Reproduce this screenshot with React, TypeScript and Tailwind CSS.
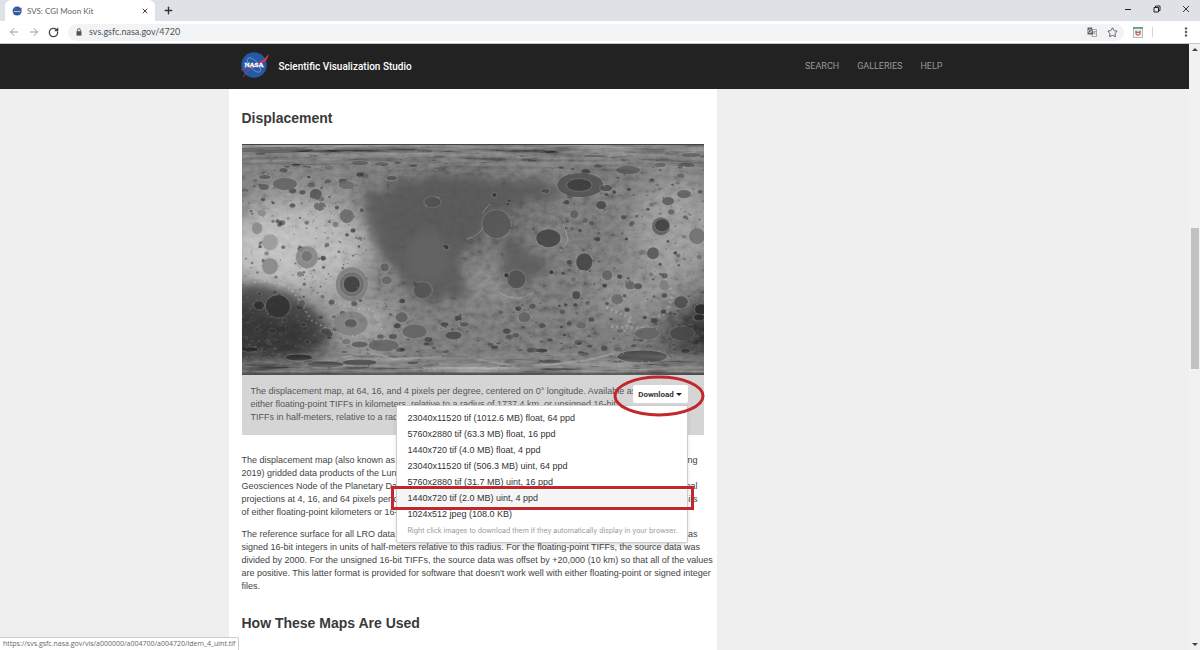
import { useState } from "react";
import { ArrowLeft, ArrowRight, MoreVertical, Plus, RotateCw, Star, X } from "lucide-react";

const downloads = [
  "23040x11520 tif (1012.6 MB) float, 64 ppd",
  "5760x2880 tif (63.3 MB) float, 16 ppd",
  "1440x720 tif (4.0 MB) float, 4 ppd",
  "23040x11520 tif (506.3 MB) uint, 64 ppd",
  "5760x2880 tif (31.7 MB) uint, 16 ppd",
  "1440x720 tif (2.0 MB) uint, 4 ppd",
  "1024x512 jpeg (108.0 KB)",
];

// x, y, rx, ry, floor colour
const craters: [number, number, number, number, string][] = [
  [30, 6, 42, 3, "#474747"], [115, 5, 25, 2, "#555"], [118, 19, 9, 2, "#4c4c4c"], [140, 20, 7, 2, "#4c4c4c"],
  [43, 40, 12, 6, "#626262"], [23, 33, 6, 2, "#5b5b5b"], [22, 43, 5, 3, "#5b5b5b"], [74, 50, 6, 5, "#555"],
  [78, 62, 6, 4, "#686868"], [105, 72, 7, 7, "#696969"], [20, 69, 4, 3, "#8a8a8a"], [15, 84, 5, 6, "#888"],
  [28, 98, 8, 8, "#9a9a9a"], [28, 122, 8, 8, "#868686"], [65, 113, 11, 11, "#858585"], [65, 112, 5, 5, "#707070"],
  [110, 140, 16, 17, "#7c7c7c"], [110, 140, 12, 12, "#6a6a6a"], [110, 140, 8, 8, "#3c3c3c"], [36, 162, 12, 11, "#303030"],
  [17, 161, 5, 4, "#2c2c2c"], [109, 179, 17, 12, "#808080"], [109, 179, 6, 4, "#555"], [84, 187, 5, 3, "#444"],
  [60, 159, 3, 3, "#555"], [57, 213, 13, 3, "#1c1c1c"], [8, 205, 8, 2, "#222"], [118, 200, 8, 3, "#5a5a5a"],
  [142, 201, 15, 6, "#636363"], [118, 218, 17, 3, "#363636"], [84, 220, 18, 3, "#363636"], [20, 220, 18, 2, "#383838"],
  [160, 173, 6, 5, "#5e5e5e"], [173, 187, 12, 7, "#616161"], [212, 191, 8, 4, "#494949"], [203, 180, 4, 2, "#444"],
  [223, 180, 4, 2, "#555"], [143, 123, 4, 4, "#5d5d5d"], [145, 136, 5, 4, "#636363"], [181, 146, 9, 8, "#525252"],
  [120, 66, 2, 2, "#555"], [255, 80, 14, 14, "#545454"], [307, 94, 12, 9, "#434343"], [343, 118, 8, 9, "#434343"],
  [275, 135, 9, 9, "#515151"], [339, 41, 23, 12, "#505050"], [338, 41, 12, 6, "#3b3b3b"], [365, 44, 6, 3, "#4b4b4b"],
  [387, 26, 12, 4, "#565656"], [360, 61, 5, 4, "#484848"], [333, 70, 4, 4, "#5c5c5c"], [420, 82, 9, 9, "#595959"],
  [421, 81, 7, 6, "#414141"], [427, 57, 6, 4, "#5b5b5b"], [443, 50, 7, 4, "#5f5f5f"], [456, 92, 8, 8, "#707070"],
  [412, 109, 6, 6, "#555"], [366, 131, 5, 5, "#626262"], [335, 151, 4, 4, "#454545"], [389, 141, 5, 4, "#616161"],
  [397, 142, 4, 3, "#505050"], [423, 141, 5, 5, "#7c7c7c"], [440, 158, 7, 6, "#4b4b4b"], [376, 155, 6, 5, "#696969"],
  [406, 189, 12, 6, "#626262"], [441, 189, 12, 7, "#484848"], [460, 165, 6, 5, "#252525"], [458, 173, 5, 3, "#272727"],
  [401, 212, 25, 6, "#424242"], [308, 217, 12, 2, "#4a4a4a"], [300, 206, 6, 2, "#3b3b3b"], [340, 181, 5, 3, "#656565"],
  [283, 173, 6, 5, "#616161"], [304, 47, 4, 2, "#484848"], [373, 48, 2, 2, "#444"], [280, 12, 8, 1, "#555"],
  [355, 12, 12, 1, "#505050"], [445, 21, 9, 2, "#4d4d4d"], [450, 11, 10, 2, "#4d4d4d"], [419, 21, 6, 2, "#555"],
  [150, 34, 5, 2, "#505050"], [105, 41, 8, 4, "#6a6a6a"], [205, 103, 2, 2, "#333"],
  [253, 51, 2, 2, "#333"], [191, 58, 8, 5, "#4f4f4f"], [265, 131, 2, 2, "#2c2c2c"], [310, 128, 2, 2, "#333"],
];

// small craters scattered over the highlands, flatter towards the poles
const scatter = (() => {
  let seed = 4720;
  const next = () => (seed = (seed * 16807) % 2147483647) / 2147483647;
  const list: { x: number; y: number; rx: number; ry: number; o: number }[] = [];
  while (list.length < 1200) {
    const x = next() * 463;
    const y = next() * 222 + 6;
    const size = 0.6 + next() ** 4 * 2.6;
    const o = 0.25 + next() * 0.5;
    const basin = x > 125 && x < 315 && y > 25 && y < 155;
    if (basin && next() < 0.95) continue;
    const lat = Math.abs(y - 115) / 115;
    const stretch = 1 / Math.sqrt(Math.max(0.06, 1 - lat * lat));
    list.push({ x, y, rx: size * Math.min(stretch, 4), ry: size * (lat > 0.8 ? 0.6 : 0.9), o });
  }
  return list;
})();

const MoonMap = () => (
  <svg viewBox="0 0 463 231" preserveAspectRatio="none" className="block w-full aspect-[463/232]" role="img" aria-label="Lunar displacement map">
    <defs>
      <filter id="soft" x="-60%" y="-60%" width="220%" height="220%"><feGaussianBlur stdDeviation="14" /></filter>
      <filter id="edge" filterUnits="userSpaceOnUse" x="-60" y="-20" width="580" height="280">
        <feTurbulence type="fractalNoise" baseFrequency="0.06" numOctaves="4" seed="4" />
        <feDisplacementMap in="SourceGraphic" scale="18" result="d" />
        <feGaussianBlur in="d" stdDeviation="5" />
      </filter>
      <filter id="rough" filterUnits="userSpaceOnUse" x="-20" y="-20" width="500" height="270">
        <feTurbulence type="fractalNoise" baseFrequency="0.2" numOctaves="2" seed="8" />
        <feDisplacementMap in="SourceGraphic" scale="2" result="d" />
        <feGaussianBlur in="d" stdDeviation="0.5" />
      </filter>
      <filter id="grain" x="0" y="0" width="100%" height="100%">
        <feTurbulence type="fractalNoise" baseFrequency="0.12 0.16" numOctaves="4" seed="11" />
        <feColorMatrix values="1.4 0 0 0 -0.2  1.4 0 0 0 -0.2  1.4 0 0 0 -0.2  0 0 0 0 1" />
      </filter>
      <filter id="streaks" x="0" y="0" width="100%" height="100%">
        <feTurbulence type="fractalNoise" baseFrequency="0.015 0.22" numOctaves="3" seed="5" />
        <feColorMatrix values="1.5 0 0 0 -0.4  1.5 0 0 0 -0.4  1.5 0 0 0 -0.4  0 0 0 0 1" />
      </filter>
      <linearGradient id="poles" x1="0" x2="0" y1="0" y2="1">
        <stop offset="0" stopColor="#fff" />
        <stop offset="0.07" stopColor="#777" />
        <stop offset="0.15" stopColor="#000" />
        <stop offset="0.88" stopColor="#000" />
        <stop offset="0.95" stopColor="#999" />
        <stop offset="1" stopColor="#fff" />
      </linearGradient>
      <mask id="polar"><rect width="463" height="231" fill="url(#poles)" /></mask>
      <clipPath id="frame"><rect width="463" height="231" /></clipPath>
    </defs>
    <g clipPath="url(#frame)">
      <rect width="463" height="231" fill="#727272" />
      <g filter="url(#soft)">
        <ellipse cx="55" cy="105" rx="75" ry="48" fill="#b4b4b4" />
        <ellipse cx="20" cy="105" rx="45" ry="32" fill="#bcbcbc" />
        <ellipse cx="115" cy="178" rx="42" ry="28" fill="#999" />
        <ellipse cx="60" cy="45" rx="60" ry="15" fill="#848484" />
        <ellipse cx="435" cy="85" rx="45" ry="52" fill="#959595" />
        <ellipse cx="395" cy="150" rx="45" ry="22" fill="#8b8b8b" />
        <ellipse cx="250" cy="130" rx="28" ry="26" fill="#848484" />
        <ellipse cx="230" cy="2" rx="240" ry="8" fill="#555" />
        <ellipse cx="20" cy="192" rx="68" ry="34" fill="#2c2c2c" />
        <ellipse cx="462" cy="185" rx="42" ry="28" fill="#2c2c2c" />
        <ellipse cx="215" cy="75" rx="80" ry="45" fill="#606060" />
      </g>
      <rect width="463" height="231" filter="url(#grain)" opacity="0.4" style={{ mixBlendMode: "soft-light" }} />
      <g filter="url(#edge)" fillOpacity="0.8">
        <path d="M128 47 Q150 44 170 36 Q200 30 235 34 L300 38 L328 48 L300 56 Q275 60 268 66 L242 72 Q242 92 226 100 Q215 112 220 126 L225 155 L184 158 Q165 148 155 125 Q130 105 126 80Z" fill="#555" />
        <path d="M262 92 Q285 96 285 110 Q300 108 308 120 L290 134 Q280 148 266 142 Q258 130 262 110Z" fill="#595959" />
        <ellipse cx="186" cy="112" rx="22" ry="26" fill="#666" />
        <path d="M-20 146 Q42 132 60 158 Q88 176 88 200 L-20 215Z" fill="#383838" fillOpacity="0.7" />
      </g>
      <g filter="url(#rough)">
        <g fill="none" stroke="#ccc" strokeOpacity="0.35">
          <path d="M12 138 Q42 134 54 151 L70 176 L92 188 M92 158 Q115 166 130 165 L142 188" strokeWidth="2" strokeDasharray="2 3" />
          <path d="M184 63 Q190 50 198 54 M225 95 Q239 91 242 82 M241 70 Q244 62 250 61 M258 148 Q275 160 292 148 M322 80 L327 96 L319 107" strokeWidth="1" />
          <path d="M365 163 L390 174 L382 189 M422 130 L432 148 L426 169 L410 174 M370 182 L402 184" strokeWidth="3" strokeDasharray="2 3" />
          <path d="M100 213 Q135 205 152 215 L200 212 M236 215 L280 223 L345 216 L373 209 M170 224 L320 223" strokeWidth="2" />
        </g>
        {scatter.map((c, i) => (
          <ellipse key={i} cx={c.x} cy={c.y} rx={c.rx} ry={c.ry} fill="#303030" fillOpacity={c.o} stroke="#ccc" strokeOpacity="0.2" strokeWidth="0.7" />
        ))}
        {craters.map(([x, y, rx, ry, fill], i) => (
          <g key={i}>
            <ellipse cx={x} cy={y} rx={rx + 1.5} ry={ry + 1.2} fill="#aaa" fillOpacity="0.18" />
            <ellipse cx={x} cy={y} rx={rx} ry={ry} fill={fill} fillOpacity="0.85" />
          </g>
        ))}
      </g>
      <g mask="url(#polar)">
        <rect width="463" height="231" filter="url(#streaks)" opacity="0.4" />
      </g>
      <rect width="463" height="1" fill="#444" />
      <rect y="228" width="463" height="3" fill="#333" opacity="0.6" />
    </g>
  </svg>
);

const NasaLogo = ({ className }: { className: string }) => (
  <svg viewBox="0 0 30 28" className={className} aria-hidden="true">
    <circle cx="14" cy="14" r="12.7" fill="#2559a5" />
    <ellipse cx="14" cy="14" rx="9" ry="4" fill="none" stroke="#a9c0e4" strokeWidth="0.5" transform="rotate(48 14 14)" />
    <path d="M20 11 Q25 8 29 3 Q28 8 24 11 L14 15Z" fill="#d33a4e" />
    <path d="M1 19 L22 11 M3 26 Q6 20 13 16" fill="none" stroke="#b8405c" strokeWidth="0.8" />
    <text x="14" y="16" fontFamily="Liberation Serif, serif" fontSize="7" fontWeight="700" fill="#fff" stroke="#fff" strokeWidth="0.3" textAnchor="middle">NASA</text>
  </svg>
);

const Browser = () => (
  <div className="shrink-0 font-['Lato',sans-serif]">
    <div className="flex h-[21px] items-stretch bg-[#dee1e6] pl-[5px]">
      <div className="flex w-[150px] items-center rounded-t-md bg-white pl-[7px] pr-[6px]">
        <NasaLogo className="h-[10px] w-[11px]" />
        <span className="ml-1 flex-1 text-[8px] text-[#5f6368]">SVS: CGI Moon Kit</span>
        <button aria-label="Close tab"><X className="h-2 w-2 text-[#444]" strokeWidth={3} /></button>
      </div>
      <button aria-label="New tab" className="ml-2"><Plus className="h-[11px] w-[11px] text-[#333]" strokeWidth={3} /></button>
      <div className="ml-auto flex items-center gap-[21px] pb-[3px] pr-[10px] text-[#222]">
        <button aria-label="Minimize"><svg viewBox="0 0 8 8" className="h-2 w-2"><path d="M1 4.5h6" stroke="currentColor" /></svg></button>
        <button aria-label="Restore"><svg viewBox="0 0 8 8" className="h-2 w-2" fill="none" stroke="currentColor"><path d="M1 2.5h4.5V7H1zM2.5 2.5V1H7v4.5H5.5" /></svg></button>
        <button aria-label="Close window"><svg viewBox="0 0 8 8" className="h-2 w-2"><path d="M1 1l6 6M7 1L1 7" stroke="currentColor" strokeWidth="0.9" /></svg></button>
      </div>
    </div>
    <div className="flex h-[23px] items-center border-b border-[#c4c6c8] bg-white pl-2 pr-2">
      <button aria-label="Back"><ArrowLeft className="h-3 w-3 text-[#999]" /></button>
      <button aria-label="Forward" className="ml-2"><ArrowRight className="h-3 w-3 text-[#999]" /></button>
      <button aria-label="Reload" className="ml-2"><RotateCw className="h-[11px] w-[11px] text-[#444]" strokeWidth={3} /></button>
      <div className="ml-[9px] flex h-[17px] flex-1 items-center rounded-full bg-[#f1f3f4] pl-[7px] pr-[6px]">
        <svg viewBox="0 0 8 8" className="h-2 w-2">
          <path d="M1.5 3.2h5V7.6h-5z" fill="#50545a" />
          <path d="M2.6 3.4V2a1.4 1.4 0 0 1 2.8 0v1.4" fill="none" stroke="#50545a" strokeWidth="0.8" />
        </svg>
        <input aria-label="Address" defaultValue="svs.gsfc.nasa.gov/4720" className="ml-[6px] block min-w-0 flex-1 bg-transparent text-[9px] text-[#50545a] outline-none" />
        <svg viewBox="0 0 10 10" className="h-[10px] w-[10px]">
          <path d="M4.5 2.5H9.5V9.5H5z" fill="#f1f3f4" stroke="#888" strokeWidth="0.7" />
          <path d="M0.5 0.5H5L6.5 7.5H0.5z" fill="#5f6368" />
          <path d="M4.4 3.3A1.6 1.6 0 1 0 4.6 4.4H3.2" fill="none" stroke="#f1f3f4" strokeWidth="0.7" />
          <path d="M6.3 4.6h2.6M7.6 4v.6M8.4 4.6L6.8 7M6.8 5.5L8.5 7.4" stroke="#777" strokeWidth="0.6" fill="none" />
        </svg>
        <Star className="ml-[10px] h-[11px] w-[11px] text-[#50545a]" strokeWidth={2} />
      </div>
      <svg viewBox="0 0 10 11" className="ml-[9px] h-[11px] w-[10px]">
        <rect x="0.5" y="0.5" width="9" height="10" fill="#f3f3f3" stroke="#bbb" />
        <path d="M0 1h10" stroke="#36a675" strokeWidth="1.6" />
        <path d="M3 3.5v3.5q0 1 2 1t2-1V3.5M3 5.2h4" fill="none" stroke="#a33a3a" strokeWidth="1" />
      </svg>
      <span className="ml-[9px] h-[10px] w-px bg-[#d5d7da]" />
      <button aria-label="Menu" className="ml-[27px]"><MoreVertical className="h-3 w-3 text-[#555]" strokeWidth={3} /></button>
    </div>
  </div>
);

const SiteHeader = () => (
  <header className="shrink-0 bg-[#222]">
    <div className="mx-auto flex h-[45px] max-w-[732px] items-center pl-[11px]">
      <a href="#home" className="flex items-center">
        <NasaLogo className="-mt-[3px] h-7 w-[30px]" />
        <span className="ml-[9px] font-['Roboto',sans-serif] text-[10px] font-medium text-white">Scientific Visualization Studio</span>
      </a>
      <nav className="ml-auto mr-[18px] flex gap-[18px] font-['Roboto',sans-serif] text-[9px] text-[#999]">
        <a href="#search">SEARCH</a>
        <a href="#galleries">GALLERIES</a>
        <a href="#help">HELP</a>
      </nav>
    </div>
  </header>
);

const DownloadMenu = () => {
  const [open, setOpen] = useState(true);
  return (
    <div className="relative shrink-0">
      <button
        onClick={() => setOpen(!open)}
        aria-expanded={open}
        className="flex h-[18px] w-[55px] items-center justify-center gap-[2px] whitespace-nowrap rounded-xs bg-white font-['Roboto',sans-serif] text-[8px] font-bold text-[#333]"
      >
        Download
        <span className="border-x-[3px] border-t-[3px] border-x-transparent border-t-[#222]" />
      </button>
      {open && (
        <div className="absolute right-0 top-5 z-10 w-[292px] rounded-xs border border-[#ccc] bg-white pb-[2px] pt-1 shadow-md">
          <ul>
            {downloads.map((item, index) => (
              <li key={item} className="relative">
                <a href={`#file-${index}`} className={`block whitespace-nowrap pl-[11px] text-[9px] leading-4 text-[#333] ${index === 5 ? "bg-[#f5f5f5]" : ""}`}>
                  {item}
                </a>
                {index === 5 && <span className="pointer-events-none absolute -left-[6px] -right-[7px] -top-1 h-6 border-3 border-[#c1272d]" />}
              </li>
            ))}
          </ul>
          <p className="whitespace-nowrap pl-[11px] font-['Inter',sans-serif] text-[7px] leading-[18px] text-[#999]">Right click images to download them if they automatically display in your browser.</p>
        </div>
      )}
      <svg viewBox="0 0 92 42" className="pointer-events-none absolute -left-[20px] -top-[10px] z-20 h-[42px] w-[92px] max-w-none">
        <ellipse cx="46" cy="21" rx="44" ry="19" fill="none" stroke="#c1272d" strokeWidth="3" />
      </svg>
    </div>
  );
};

// a line of copy whose last words sit at the far side of the column
const Line = ({ start, end }: { start: string; end: string }) => (
  <span className="flex justify-between whitespace-nowrap">
    <span>{start}</span>
    <span>{end}</span>
  </span>
);

const Article = () => (
  <article className="w-2/3 bg-white px-[13px] pt-5 text-[9px] leading-[13px] text-[#444]">
    <h2 className="text-[14px] font-bold leading-[18px] text-[#3a3a3a]">Displacement</h2>
    <figure className="mt-[17px]">
      <MoonMap />
      <figcaption className="flex items-start bg-[#d5d5d5] pb-[11px] pl-[9px] pr-4 pt-[10px] text-[#555]">
        <p className="h-[39px] min-w-0 flex-1 whitespace-nowrap">
          The displacement map, at 64, 16, and 4 pixels per degree, centered on 0° longitude. Available as<br />
          either floating-point TIFFs in kilometers, relative to a radius of 1737.4 km, or unsigned 16-bit<br />
          TIFFs in half-meters, relative to a radius
        </p>
        <DownloadMenu />
      </figcaption>
    </figure>
    <p className="mt-[19px] pr-[6px]">
      <Line start="The displacement map (also known as a" end="using" />
      <Line start="2019) gridded data products of the Lunar" end="" />
      <Line start="Geosciences Node of the Planetary Data" end="lunar global" />
      <Line start="projections at 4, 16, and 64 pixels per degree" end="in units" />
      <Line start="of either floating-point kilometers or 16-bit" end="" />
    </p>
    <p className="mt-[9px] whitespace-nowrap pr-[6px]">
      <Line start="The reference surface for all LRO data is" end="as" />
      signed 16-bit integers in units of half-meters relative to this radius. For the floating-point TIFFs, the source data was<br />
      divided by 2000. For the unsigned 16-bit TIFFs, the source data was offset by +20,000 (10 km) so that all of the values<br />
      are positive. This latter format is provided for software that doesn't work well with either floating-point or signed integer<br />
      files.
    </p>
    <h2 className="mt-[21px] pb-10 text-[14px] font-bold leading-[18px] text-[#3a3a3a]">How These Maps Are Used</h2>
  </article>
);

const App = () => {
  return (
    <div className="relative flex h-screen flex-col overflow-hidden bg-[#efefef] font-['Liberation_Sans',sans-serif]">
      <Browser />
      <div className="flex min-h-0 flex-1">
        <div className="flex min-w-0 flex-1 flex-col">
          <SiteHeader />
          <main className="mx-auto min-h-0 w-full max-w-[732px] flex-1 overflow-hidden">
            <Article />
          </main>
        </div>
        <div className="flex w-[11px] flex-col items-center bg-[#f1f1f1] py-1">
          <span className="border-x-[3px] border-b-[3px] border-x-transparent border-b-[#444]" />
          <span className="mt-[177px] h-[141px] w-2 bg-[#c1c1c1]" />
          <span className="mt-auto border-x-[3px] border-t-[3px] border-x-transparent border-t-[#444]" />
        </div>
      </div>
      <div className="absolute bottom-0 left-0 flex h-[13px] items-center rounded-tr-xs border-r border-t border-[#ccc] bg-white px-[3px] font-['Open_Sans',sans-serif] text-[7px] text-[#666]">
        https://svs.gsfc.nasa.gov/vis/a000000/a004700/a004720/ldem_4_uint.tif
      </div>
    </div>
  );
};

export default App;
